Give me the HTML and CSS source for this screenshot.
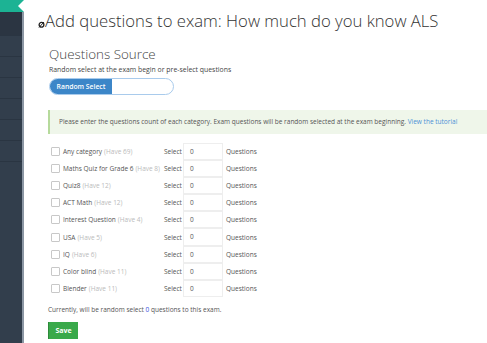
FILE: index.html
```html
<!DOCTYPE html>
<html>
<head>
<meta charset="utf-8">
<link rel="stylesheet" href="styles.css">
</head>
<body>
<div class="app">
  <aside class="sidebar">
    <div class="brand"><span class="notch"></span></div>
    <div class="nav">
      <div class="nav-item first"></div>
      <div class="nav-item"></div>
      <div class="nav-item"></div>
      <div class="nav-item"></div>
      <div class="nav-item"></div>
      <div class="nav-item"></div>
      <div class="nav-item"></div>
    </div>
  </aside>
  <main class="main">
    <h1 class="title"><svg class="title-icon" width="7" height="7" viewBox="0 0 7 7"><circle cx="3.5" cy="3.8" r="2.4" fill="none" stroke="#222" stroke-width="1.3"/><path d="M1 6.5 L6 1" stroke="#222" stroke-width="1"/></svg><span>Add questions to exam: How much do you know ALS</span></h1>
    <h2 class="section-title">Questions Source</h2>
    <p class="desc">Random select at the exam begin or pre-select questions</p>
    <div class="toggle"><span class="toggle-on">Random Select</span><span class="toggle-off"></span></div>
    <div class="alert">Please enter the questions count of each category. Exam questions will be random selected at the exam beginning. <a class="link">View the tutorial</a></div>
    <div class="rows">
      <div class="row"><label class="cat"><span class="check"></span>Any category <span class="have">(Have 69)</span></label><span class="sel">Select</span><span class="input">0</span><span class="q">Questions</span></div>
      <div class="row"><label class="cat"><span class="check"></span>Maths Quiz for Grade 6 <span class="have">(Have 8)</span></label><span class="sel">Select</span><span class="input">0</span><span class="q">Questions</span></div>
      <div class="row"><label class="cat"><span class="check"></span>Quiz8 <span class="have">(Have 12)</span></label><span class="sel">Select</span><span class="input">0</span><span class="q">Questions</span></div>
      <div class="row"><label class="cat"><span class="check"></span>ACT Math <span class="have">(Have 12)</span></label><span class="sel">Select</span><span class="input">0</span><span class="q">Questions</span></div>
      <div class="row"><label class="cat"><span class="check"></span>Interest Question <span class="have">(Have 4)</span></label><span class="sel">Select</span><span class="input">0</span><span class="q">Questions</span></div>
      <div class="row"><label class="cat"><span class="check"></span>USA <span class="have">(Have 5)</span></label><span class="sel">Select</span><span class="input">0</span><span class="q">Questions</span></div>
      <div class="row"><label class="cat"><span class="check"></span>IQ <span class="have">(Have 6)</span></label><span class="sel">Select</span><span class="input">0</span><span class="q">Questions</span></div>
      <div class="row"><label class="cat"><span class="check"></span>Color blind <span class="have">(Have 11)</span></label><span class="sel">Select</span><span class="input">0</span><span class="q">Questions</span></div>
      <div class="row"><label class="cat"><span class="check"></span>Blender <span class="have">(Have 11)</span></label><span class="sel">Select</span><span class="input">0</span><span class="q">Questions</span></div>
    </div>
    <p class="summary">Currently, will be random select <span class="count">0</span> questions to this exam.</p>
    <button class="save">Save</button>
  </main>
</div>
</body>
</html>
```
FILE: styles.css
```css
html, body {
  margin: 0;
  padding: 0;
  background: #fff;
  font-family: "Open Sans", "Liberation Sans", sans-serif;
  color: #444;
}
.app {
  display: flex;
  min-height: 343px;
  overflow: hidden;
}
.sidebar {
  width: 24px;
  flex: none;
  background: #323e4c;
  position: relative;
  display: flex;
  flex-direction: column;
}
.brand {
  height: 12px;
  background: #1cb394;
  position: relative;
}
.notch {
  position: absolute;
  right: 0;
  top: 0;
  width: 0;
  height: 0;
  border-top: 6px solid transparent;
  border-bottom: 6px solid transparent;
  border-right: 6px solid #fff;
}
.nav {
  flex: 1;
  border-right: 2px solid #8c97a4;
}
.nav-item {
  height: 20px;
  border-bottom: 1px solid #2a3542;
}
.nav-item.first {
  height: 23px;
  background: #2b3542;
}
.main {
  flex: 1;
  padding: 0 0 0 24px;
  min-width: 0;
}
.title {
  margin: 9px 0 0 -10px;
  font-weight: 300;
  font-size: 16.7px;
  line-height: 24px;
  color: #333;
  white-space: nowrap;
  display: flex;
  align-items: center;
}
.title-icon {
  flex: none;
  margin: 6px 0 0 0;
}
.section-title {
  margin: 12px 0 0 1px;
  font-weight: 300;
  font-size: 13.4px;
  line-height: 18px;
  color: #444;
}
.desc {
  margin: 1px 0 0 1px;
  font-size: 6.9px;
  line-height: 12px;
  color: #444;
}
.toggle {
  margin: 2px 0 0 1px;
  width: 123px;
  height: 15px;
  border: 1px solid #a9cbec;
  border-radius: 9px;
  display: flex;
  overflow: hidden;
}
.toggle-on {
  width: 62px;
  background: #3c86c8;
  color: #fff;
  font-size: 6.8px;
  font-weight: 600;
  line-height: 15px;
  text-align: center;
}
.alert {
  margin: 15px 0 0 0;
  background: #eff6ea;
  border-left: 2px solid #b6da9c;
  padding: 0 0 0 9px;
  height: 24px;
  line-height: 24px;
  font-size: 6.5px;
  color: #555;
  white-space: nowrap;
}
.link {
  color: #4a90d6;
}
.rows {
  margin-top: 9px;
  display: flex;
  flex-direction: column;
}
.row {
  display: grid;
  grid-template-columns: 116px 19px 40px auto;
  height: 17.1px;
  align-items: center;
  font-size: 6.5px;
  color: #555;
}
.cat {
  display: flex;
  align-items: center;
  white-space: nowrap;
}
.have {
  color: #bbb;
  margin-left: 2px;
}
.check {
  width: 7px;
  height: 7px;
  border: 1px solid #c8c8c8;
  border-radius: 1px;
  margin: 0 3px 0 3px;
  flex: none;
}
.sel {
  white-space: nowrap;
}
.input {
  box-sizing: border-box;
  height: 17.1px;
  border: 1px solid #eee;
  padding-left: 6px;
  line-height: 15px;
  color: #555;
}
.q {
  margin-left: 3px;
}
.summary {
  margin: 7px 0 0 0;
  font-size: 6.5px;
  line-height: 12px;
  color: #555;
}
.count {
  color: #3b52e0;
}
.save {
  display: block;
  margin-top: 6px;
  width: 30px;
  height: 17px;
  padding: 0;
  border: none;
  border-left: 1px solid #2d8a3a;
  background: #39a94a;
  color: #fff;
  font-family: "Open Sans", "Liberation Sans", sans-serif;
  font-weight: 700;
  font-size: 7px;
  line-height: 17px;
}
```
